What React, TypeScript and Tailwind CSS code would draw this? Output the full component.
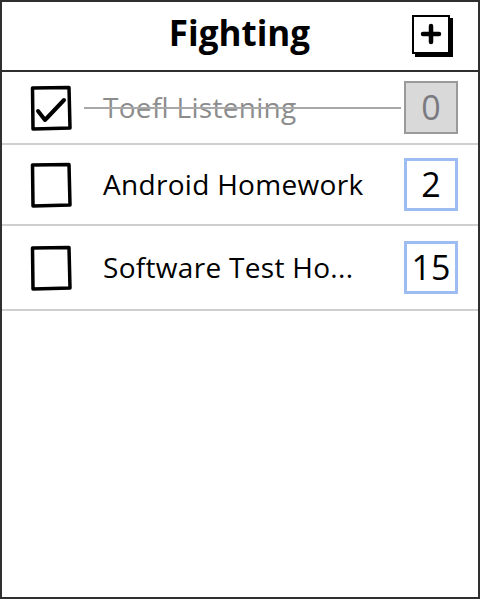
import React from "react";

const font = { fontFamily: '"Open Sans", "Liberation Sans", sans-serif' };

const CheckBox = ({ checked }: { checked: boolean }) => (
  <svg width="42" height="46" viewBox="0 0 42 46" className="shrink-0">
    <path
      d="M2.5 3 L39 2.5 L40 43 L3 44 Z"
      fill="none"
      stroke="#000"
      strokeWidth="3.5"
      strokeLinejoin="round"
    />
    {checked && (
      <path
        d="M8 26 L15 35 L34 15"
        fill="none"
        stroke="#000"
        strokeWidth="4"
        strokeLinecap="round"
        strokeLinejoin="round"
      />
    )}
  </svg>
);

type Task = { name: string; count: string; done: boolean; h: string };

const tasks: Task[] = [
  { name: "Toefl Listening", count: "0", done: true, h: "h-[73px]" },
  { name: "Android Homework", count: "2", done: false, h: "h-[81px]" },
  { name: "Software Test Ho...", count: "15", done: false, h: "h-[85px]" },
];

const Row = ({ task }: { task: Task }) => (
  <div
    className={`${task.h} shrink-0 flex items-center border-b-2 border-[#cfcfcf] pl-[28px] pr-[20px]`}
  >
    <CheckBox checked={task.done} />
    <div className="relative flex-1 h-full flex items-center pl-[31px] -mt-[2px]">
      <span
        className={`text-[28px] tracking-[0.3px] whitespace-nowrap ${task.done ? "text-[#8c8c8c]" : "text-black"}`}
      >
        {task.name}
      </span>
      {task.done && (
        <div className="absolute left-[12px] right-[3px] top-1/2 h-[2px] bg-[#a8a8a8]" />
      )}
    </div>
    <div
      className={`w-[54px] h-[53px] flex items-center justify-center text-[34px] ${
        task.done
          ? "bg-[#d9d9d9] border-2 border-[#9a9a9a] text-[#7a7a80]"
          : "border-[3px] border-[#9dbdf2] text-black"
      }`}
    >
      {task.count}
    </div>
  </div>
);

export default function App() {
  return (
    <div
      className="w-[480px] h-[599px] border-2 border-[#2f2f2f] bg-white flex flex-col"
      style={font}
    >
      <div className="h-[70px] shrink-0 grid grid-cols-[1fr_auto_1fr] items-center border-b-2 border-[#2f2f2f] pr-[28px]">
        <div />
        <div className="text-[35px] font-bold text-black -mt-[5px] pl-[27px]">
          Fighting
        </div>
        <div className="flex justify-end">
          <div className="relative w-[38px] h-[39px] -mt-[4px]">
            <div className="absolute left-[3px] top-[3px] w-[38px] h-[39px] bg-black" />
            <div className="absolute inset-0 bg-white border-2 border-black flex items-center justify-center">
              <svg width="22" height="22" viewBox="0 0 22 22">
                <path
                  d="M11 3 V19 M3 11 H19"
                  stroke="#000"
                  strokeWidth="4.5"
                  strokeLinecap="round"
                />
              </svg>
            </div>
          </div>
        </div>
      </div>
      {tasks.map((t) => (
        <Row key={t.name} task={t} />
      ))}
    </div>
  );
}
